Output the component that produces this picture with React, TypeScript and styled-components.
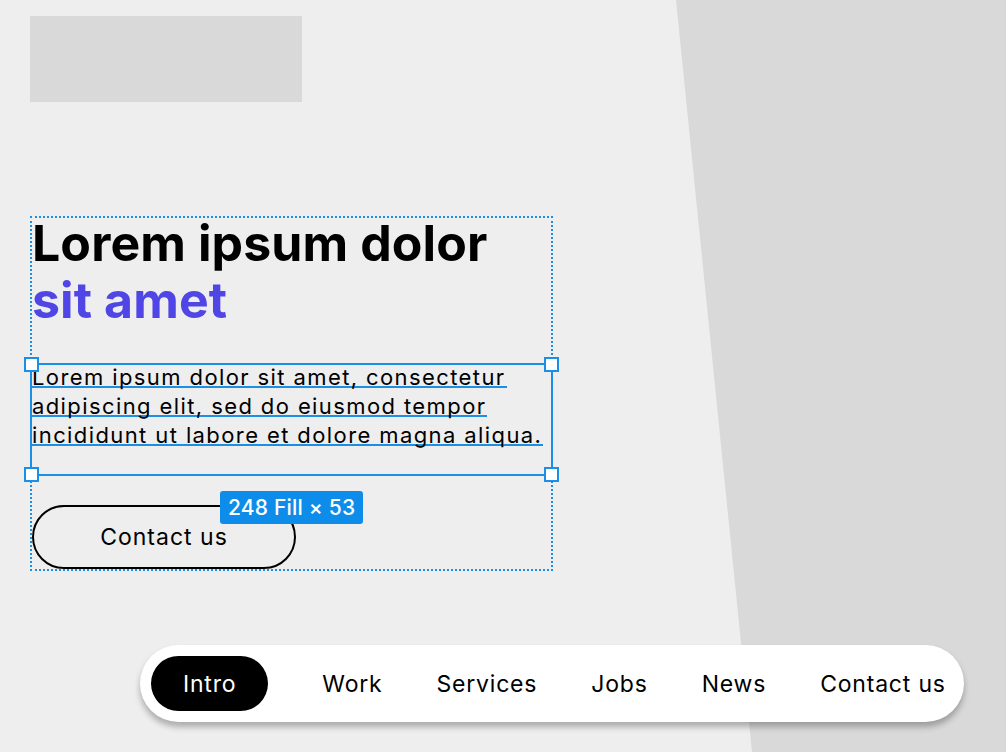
import React from "react";
import styled, { createGlobalStyle } from "styled-components";

const GlobalStyle = createGlobalStyle`
  html, body {
    margin: 0;
    padding: 0;
    background: #eeeeee;
  }
  body {
    font-family: Inter, "Noto Sans", "Liberation Sans", sans-serif;
    color: #000;
  }
`;

const figmaBlue = "#1b8ee6";

const Page = styled.div`
  position: relative;
  width: 1006px;
  height: 752px;
  overflow: hidden;
  background: #eeeeee;
  box-sizing: border-box;
  padding: 16px 42px 0 30px;

  /* slanted grey panel behind the content */
  &::before {
    content: "";
    position: absolute;
    inset: 0;
    background: #d9d9d9;
    clip-path: polygon(676px 0, 1006px 0, 1006px 752px, 752px 752px);
    z-index: 0;
  }

  & > * {
    position: relative;
    z-index: 1;
  }
`;

const LogoPlaceholder = styled.div`
  width: 272px;
  height: 86px;
  background: #d9d9d9;
`;

const HeroFrame = styled.section`
  position: relative;
  width: 523px;
  height: 355px;
  margin-top: 114px;
  box-sizing: border-box;
  border: 2px dotted ${figmaBlue};
  display: flex;
  flex-direction: column;
`;

const Heading = styled.h1`
  margin: -3px 0 0 0;
  font-size: 50px;
  line-height: 57px;
  font-weight: 700;
  letter-spacing: 0.1px;
`;

const Accent = styled.span`
  display: block;
  color: #5046e5;
`;

const SelectedBox = styled.div`
  position: relative;
  margin: 34px -2px 0;
  height: 114px;
  box-sizing: border-box;
  border: 2px solid ${figmaBlue};
`;

const Handle = styled.span<{ $x: "left" | "right"; $y: "top" | "bottom" }>`
  position: absolute;
  width: 11px;
  height: 11px;
  background: #fff;
  border: 2px solid ${figmaBlue};
  ${(p) => (p.$x === "left" ? "left: -8px;" : "right: -8px;")}
  ${(p) => (p.$y === "top" ? "top: -8px;" : "bottom: -8px;")}
`;

const Paragraph = styled.p`
  margin: -2px 0 0 0;
  font-size: 22px;
  line-height: 29px;
  letter-spacing: 1.4px;
`;

const Line = styled.span`
  display: block;
  width: fit-content;
  padding: 0 1px 0 0;
  background: linear-gradient(${figmaBlue}, ${figmaBlue}) no-repeat left 23px / 100% 2px;
`;

const OutlineButton = styled.button`
  margin-top: 29px;
  width: 264px;
  height: 64px;
  border: 2px solid #000;
  border-radius: 32px;
  background: transparent;
  font-family: inherit;
  font-size: 23px;
  letter-spacing: 1px;
  color: #000;
  cursor: pointer;
`;

const SizeBadge = styled.span`
  position: absolute;
  left: 188px;
  top: 273px;
  height: 33px;
  padding: 0 8px;
  display: flex;
  align-items: center;
  background: #0d8ce9;
  color: #fff;
  border-radius: 3px;
  font-size: 21px;
  font-weight: 500;
  letter-spacing: 0.2px;
  white-space: nowrap;
`;

const NavRow = styled.div`
  display: flex;
  justify-content: flex-end;
  margin-top: 74px;
`;

const NavBar = styled.nav`
  display: flex;
  align-items: center;
  gap: 54px;
  width: 824px;
  height: 77px;
  box-sizing: border-box;
  padding: 0 21px 0 11px;
  background: #fff;
  border-radius: 39px;
  box-shadow: 0 5px 6px rgba(0, 0, 0, 0.28);
`;

const NavItem = styled.a<{ $active?: boolean }>`
  display: flex;
  align-items: center;
  height: 55px;
  font-size: 23px;
  letter-spacing: 0.8px;
  color: ${(p) => (p.$active ? "#fff" : "#000")};
  background: ${(p) => (p.$active ? "#000" : "transparent")};
  padding: ${(p) => (p.$active ? "0 32px" : "0")};
  border-radius: 28px;
  text-decoration: none;
  white-space: nowrap;
`;

const navItems = ["Intro", "Work", "Services", "Jobs", "News", "Contact us"];

export default function App() {
  return (
    <>
      <GlobalStyle />
      <Page>
        <LogoPlaceholder />
        <HeroFrame>
          <Heading>
            Lorem ipsum dolor
            <Accent>sit amet</Accent>
          </Heading>
          <SelectedBox>
            <Handle $x="left" $y="top" />
            <Handle $x="right" $y="top" />
            <Handle $x="left" $y="bottom" />
            <Handle $x="right" $y="bottom" />
            <Paragraph>
              <Line>Lorem ipsum dolor sit amet, consectetur</Line>
              <Line>adipiscing elit, sed do eiusmod tempor</Line>
              <Line>incididunt ut labore et dolore magna aliqua.</Line>
            </Paragraph>
          </SelectedBox>
          <OutlineButton>Contact us</OutlineButton>
          <SizeBadge>248 Fill × 53</SizeBadge>
        </HeroFrame>
        <NavRow>
          <NavBar>
            {navItems.map((item, i) => (
              <NavItem key={item} href="#" $active={i === 0}>
                {item}
              </NavItem>
            ))}
          </NavBar>
        </NavRow>
      </Page>
    </>
  );
}
